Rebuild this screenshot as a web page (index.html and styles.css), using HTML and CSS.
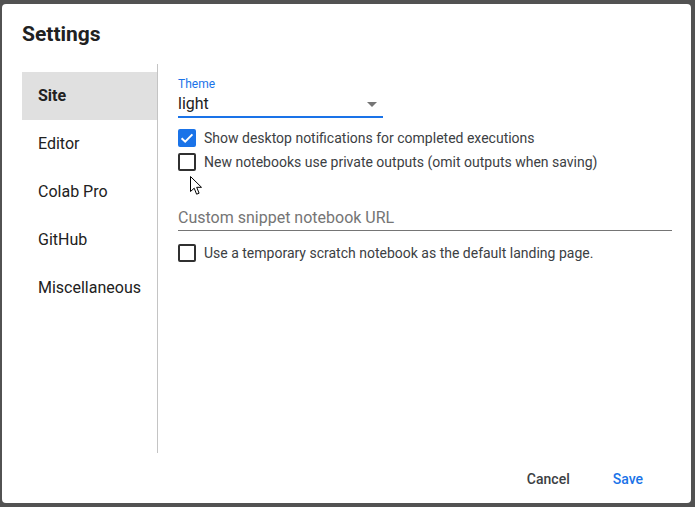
FILE: index.html
```html
<!DOCTYPE html>
<html>
<head>
<meta charset="utf-8">
<link rel="stylesheet" href="styles.css">
</head>
<body>
<div class="dialog">
  <h1 class="title">Settings</h1>
  <div class="body">
    <nav class="sidebar">
      <div class="nav-item active">Site</div>
      <div class="nav-item">Editor</div>
      <div class="nav-item">Colab Pro</div>
      <div class="nav-item">GitHub</div>
      <div class="nav-item">Miscellaneous</div>
    </nav>
    <div class="content">
      <div class="select-field">
        <div class="select-label">Theme</div>
        <div class="select">
          <span>light</span>
          <span class="arrow"></span>
        </div>
      </div>
      <div class="checks">
        <label class="check">
          <span class="box checked">
            <svg width="18" height="18" viewBox="0 0 18 18"><path d="M3.6 9.2 L7.2 12.7 L14.4 5.4" fill="none" stroke="#fff" stroke-width="2"/></svg>
          </span>
          <span>Show desktop notifications for completed executions</span>
        </label>
        <label class="check">
          <span class="box"></span>
          <span>New notebooks use private outputs (omit outputs when saving)</span>
        </label>
      </div>
      <div class="text-field">Custom snippet notebook URL</div>
      <label class="check">
        <span class="box"></span>
        <span>Use a temporary scratch notebook as the default landing page.</span>
      </label>
      <svg class="cursor" width="13" height="20" viewBox="0 0 13 20"><path d="M0.5 0.5 L0.5 15.5 L4.2 12.2 L6.6 18.2 L9.1 17.2 L6.7 11.3 L11.5 11.3 Z" fill="#fff" stroke="#000" stroke-width="1" stroke-linejoin="miter"/></svg>
    </div>
  </div>
  <div class="footer">
    <button class="btn">Cancel</button>
    <button class="btn primary">Save</button>
  </div>
</div>
</body>
</html>
```

FILE: styles.css
```css
html, body {
  margin: 0;
  padding: 0;
}
body {
  background: #525252;
  width: 695px;
  height: 507px;
  overflow: hidden;
  font-family: Roboto, "Noto Sans", Arial, sans-serif;
  color: #212121;
}
.dialog {
  box-sizing: border-box;
  margin: 4px 0 0 2px;
  width: 689px;
  height: 499px;
  background: #fff;
  border-radius: 4px;
  display: flex;
  flex-direction: column;
}
.title {
  margin: 0;
  padding: 16px 20px 0 20px;
  font-size: 21px;
  line-height: 28px;
  font-weight: 700;
  color: #212121;
  height: 44px;
}
.body {
  flex: 1;
  display: flex;
  margin: 0 0 0 20px;
  min-height: 0;
}
.sidebar {
  width: 135px;
  padding-top: 8px;
  border-right: 1px solid #c4c4c4;
  flex: none;
}
.nav-item {
  height: 48px;
  line-height: 48px;
  padding-left: 16px;
  font-size: 16px;
  color: #212121;
}
.nav-item.active {
  background: #e0e0e0;
  font-weight: 700;
}
.content {
  position: relative;
  flex: 1;
  padding: 12px 19px 0 20px;
}
.select-field {
  width: 205px;
}
.select-label {
  font-size: 12px;
  line-height: 16px;
  color: #1a73e8;
}
.select {
  display: flex;
  justify-content: space-between;
  align-items: center;
  padding: 2px 6px 2px 0;
  font-size: 16px;
  line-height: 20px;
  color: #212121;
  border-bottom: 2px solid #1a73e8;
}
.arrow {
  width: 0;
  height: 0;
  border-left: 5px solid transparent;
  border-right: 5px solid transparent;
  border-top: 5px solid #757575;
}
.checks {
  margin-top: 11px;
  display: flex;
  flex-direction: column;
  gap: 6px;
}
.check {
  display: flex;
  align-items: center;
  gap: 8px;
  font-size: 14px;
  line-height: 18px;
  color: #3c4043;
}
.box {
  box-sizing: border-box;
  width: 18px;
  height: 18px;
  border: 2px solid #303030;
  border-radius: 2px;
  flex: none;
  position: relative;
}
.box.checked {
  background: #1a73e8;
  border-color: #1a73e8;
}
.box svg {
  position: absolute;
  left: -2px;
  top: -2px;
}
.text-field {
  margin-top: 37px;
  padding-bottom: 2px;
  font-size: 16px;
  line-height: 20px;
  color: #757575;
  border-bottom: 1px solid #757575;
  margin-bottom: 13px;
}
.cursor {
  position: absolute;
  left: 32px;
  top: 112px;
}
.footer {
  display: flex;
  justify-content: flex-end;
  gap: 11px;
  padding: 8px 32px 6px 0;
  height: 36px;
}
.btn {
  font-family: Roboto, "Noto Sans", Arial, sans-serif;
  font-size: 14px;
  font-weight: 500;
  background: none;
  border: none;
  padding: 0 16px;
  height: 36px;
  color: #3c4043;
}
.btn.primary {
  color: #1a73e8;
}
```
